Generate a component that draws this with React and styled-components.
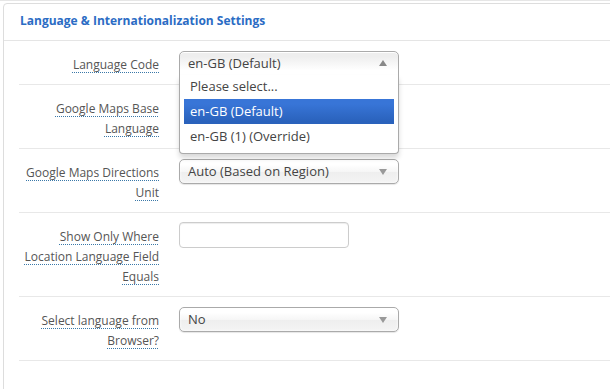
import styled, { createGlobalStyle } from "styled-components";

const Global = createGlobalStyle`
  html, body {
    margin: 0;
    padding: 0;
    background: #fff;
    overflow: hidden;
  }
  body {
    font-family: "Open Sans", "DejaVu Sans", sans-serif;
    font-size: 12px;
    color: #555;
  }
`;

const Page = styled.div`
  border-top: 1px solid #e6e6e6;
  padding-top: 2px;
  width: 660px;
`;

const Panel = styled.div`
  margin-left: 3px;
  border: 1px solid #ddd;
  border-radius: 4px;
  min-height: 420px;
  background: #fff;
`;

const PanelHeader = styled.div`
  height: 36px;
  line-height: 34px;
  padding-left: 16px;
  border-bottom: 1px solid #e5e5e5;
  font-weight: 700;
  font-size: 12px;
  color: #2b6cc4;
`;

const Form = styled.div`
  padding-left: 15px;
`;

const Row = styled.div`
  display: flex;
  align-items: flex-start;
  gap: 20px;
  padding: 10px 0 9px;
  border-bottom: 1px solid #e8e8e8;
`;

const Label = styled.label`
  flex: 0 0 140px;
  text-align: right;
  padding-top: 4px;
  line-height: 20px;
  color: #555;
  span {
    text-decoration: underline dotted #3a78a8;
    text-underline-offset: 3px;
    text-decoration-thickness: 1px;
  }
`;

const Control = styled.div`
  position: relative;
  height: 23px;
`;

const Select = styled.div`
  position: relative;
  width: 220px;
  height: 25px;
  box-sizing: border-box;
  padding-left: 8px;
  line-height: 23px;
  font-size: 13px;
  color: #444;
  border: 1px solid #aaa;
  border-radius: ${(p) => (p.$open ? "5px 5px 0 0" : "5px")};
  background: ${(p) =>
    p.$open
      ? "linear-gradient(#eee 20%, #fff 80%)"
      : "linear-gradient(#fff 20%, #f6f6f6 50%, #eee 52%, #f4f4f4 100%)"};
  box-shadow: ${(p) =>
    p.$open
      ? "0 1px 0 #fff inset"
      : "0 0 3px #fff inset, 0 1px 1px rgba(0,0,0,0.1)"};
  white-space: nowrap;
`;

const Arrow = styled.span`
  position: absolute;
  right: 11px;
  top: 9px;
  width: 0;
  height: 0;
  border-left: 4px solid transparent;
  border-right: 4px solid transparent;
  ${(p) =>
    p.$up
      ? "border-bottom: 6px solid #888; top: 8px;"
      : "border-top: 6px solid #999;"}
`;

const Drop = styled.div`
  position: absolute;
  top: 24px;
  left: 0;
  width: 220px;
  box-sizing: border-box;
  border: 1px solid #aaa;
  border-top: 0;
  background: #fff;
  box-shadow: 0 4px 5px rgba(0, 0, 0, 0.15);
  border-radius: 0 0 4px 4px;
  z-index: 10;
`;

const Results = styled.ul`
  list-style: none;
  margin: -1px 4px 4px 0;
  padding: 0 0 0 4px;
`;

const Option = styled.li`
  padding: 5px 6px;
  line-height: 15px;
  font-size: 13px;
  color: ${(p) => (p.$active ? "#fff" : "#444")};
  background: ${(p) =>
    p.$active ? "linear-gradient(#3875d7 20%, #2a62bc 90%)" : "transparent"};
`;

const TextInput = styled.input`
  display: block;
  width: 170px;
  height: 26px;
  box-sizing: border-box;
  margin-top: -1px;
  border: 1px solid #ccc;
  border-radius: 4px;
  box-shadow: inset 0 1px 1px rgba(0, 0, 0, 0.075);
  font: inherit;
  padding: 0 6px;
`;

function Field({ lines, children }) {
  return (
    <Row>
      <Label>
        {lines.map((l, i) => (
          <div key={i}>
            <span>{l}</span>
          </div>
        ))}
      </Label>
      <Control>{children}</Control>
    </Row>
  );
}

export default function App() {
  return (
    <>
      <Global />
      <Page>
        <Panel>
          <PanelHeader>Language &amp; Internationalization Settings</PanelHeader>
          <Form>
            <Field lines={["Language Code"]}>
              <Select $open>
                en-GB (Default)
                <Arrow $up />
              </Select>
              <Drop>
                <Results>
                  <Option>Please select...</Option>
                  <Option $active>en-GB (Default)</Option>
                  <Option>en-GB (1) (Override)</Option>
                </Results>
              </Drop>
            </Field>
            <Field lines={["Google Maps Base", "Language"]}>
              <Select>
                en-GB (Default)
                <Arrow />
              </Select>
            </Field>
            <Field lines={["Google Maps Directions", "Unit"]}>
              <Select>
                Auto (Based on Region)
                <Arrow />
              </Select>
            </Field>
            <Field lines={["Show Only Where", "Location Language Field", "Equals"]}>
              <TextInput type="text" />
            </Field>
            <Field lines={["Select language from", "Browser?"]}>
              <Select>
                No
                <Arrow />
              </Select>
            </Field>
          </Form>
        </Panel>
      </Page>
    </>
  );
}
